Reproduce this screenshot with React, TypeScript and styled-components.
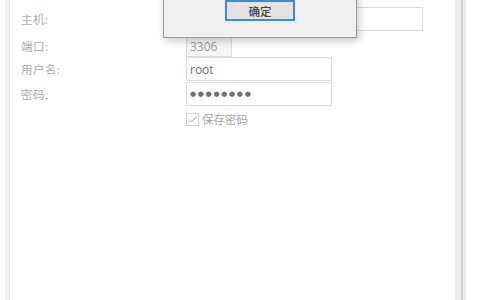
import styled, { createGlobalStyle } from "styled-components";

const GlobalStyle = createGlobalStyle`
  html, body {
    margin: 0;
    padding: 0;
    background: #ffffff;
  }
  body {
    font-family: "Noto Sans", "Noto Sans CJK SC", sans-serif;
  }
`;

interface Field {
  id: string;
  label: string;
  value: string;
  kind: "host" | "port" | "text" | "password";
}

const fields: Array<Field> = [
  { id: "host", label: "主机:", value: "", kind: "host" },
  { id: "port", label: "端口:", value: "3306", kind: "port" },
  { id: "user", label: "用户名:", value: "root", kind: "text" },
  { id: "pass", label: "密码:", value: "", kind: "password" },
];

const App = () => {
  return (
    <Root>
      <GlobalStyle />
      <LeftEdge />
      <Panel>
        <Form>
          {fields.map((field) => (
            <Row key={field.id} $kind={field.kind}>
              <Label>{field.label}</Label>
              <Input $kind={field.kind}>
                {field.kind === "password" ? <Dots>●●●●●●●●</Dots> : field.value}
              </Input>
            </Row>
          ))}
          <CheckRow>
            <Spacer />
            <CheckBox>
              <svg width="11" height="11" viewBox="0 0 11 11">
                <path d="M2 5.5 L4.5 8 L9.5 2.5" fill="none" stroke="#a0a0a0" strokeWidth="1" />
              </svg>
            </CheckBox>
            <CheckText>保存密码</CheckText>
          </CheckRow>
        </Form>
        <Dialog>
          <OkButton>确定</OkButton>
        </Dialog>
      </Panel>
      <RightEdge>
        <RightLine />
      </RightEdge>
    </Root>
  );
};

export default App;

const Root = styled.div`
  display: flex;
  width: 480px;
  height: 300px;
  background: #fff;
  overflow: hidden;
`;

const LeftEdge = styled.div`
  width: 4px;
  margin-left: 5px;
  background: #efefef;
  border-right: 1px solid #e4e4e4;
`;

const Panel = styled.div`
  position: relative;
  width: 445px;
  height: 100%;
`;

const RightEdge = styled.div`
  display: flex;
  width: 11px;
  background: #ededed;
`;

const RightLine = styled.div`
  width: 2px;
  margin-left: 6px;
  background: #d2d2d2;
`;

const Form = styled.div`
  display: flex;
  flex-direction: column;
  padding: 7px 0 0 11px;
`;

const rowTop: Record<Field["kind"], number> = {
  host: 0,
  port: 4,
  text: 0,
  password: 1,
};

const Row = styled.div<{ $kind: Field["kind"] }>`
  display: flex;
  align-items: center;
  margin-top: ${({ $kind }) => rowTop[$kind]}px;
`;

const Label = styled.div`
  width: 165px;
  font-size: 11.5px;
  color: #acacac;
  letter-spacing: 0.4px;
`;

const inputWidth: Record<Field["kind"], number> = {
  host: 237,
  port: 46,
  text: 146,
  password: 146,
};

const Input = styled.div<{ $kind: Field["kind"] }>`
  box-sizing: border-box;
  display: flex;
  align-items: center;
  width: ${({ $kind }) => inputWidth[$kind]}px;
  height: ${({ $kind }) => ($kind === "port" ? 22 : 24)}px;
  padding-left: 3px;
  border: 1px solid #dcdcdc;
  background: ${({ $kind }) => ($kind === "port" ? "#f6f6f6" : "#fff")};
  font-family: "Open Sans", "Noto Sans", sans-serif;
  font-size: 12px;
  color: ${({ $kind }) => ($kind === "port" ? "#9a9a9a" : "#6a6a6a")};
`;

const Dots = styled.span`
  font-family: "DejaVu Sans", sans-serif;
  font-size: 7px;
  letter-spacing: 1.7px;
  color: #707070;
`;

const CheckRow = styled.div`
  display: flex;
  align-items: center;
  margin-top: 5px;
`;

const Spacer = styled.div`
  width: 165px;
`;

const CheckBox = styled.div`
  box-sizing: border-box;
  display: flex;
  align-items: center;
  justify-content: center;
  width: 13px;
  height: 13px;
  border: 1px solid #d0d0d0;
  background: #fff;
`;

const CheckText = styled.span`
  margin-left: 3px;
  font-size: 11.5px;
  color: #a4a4a4;
`;

const Dialog = styled.div`
  position: absolute;
  top: -10px;
  left: 153px;
  box-sizing: border-box;
  display: flex;
  justify-content: center;
  align-items: flex-end;
  width: 194px;
  height: 48px;
  padding-bottom: 16px;
  background: #f0f0f0;
  border: 1px solid #9a9a9a;
  box-shadow: 2px 3px 8px rgba(0, 0, 0, 0.22);
`;

const OkButton = styled.div`
  box-sizing: border-box;
  display: flex;
  align-items: center;
  justify-content: center;
  width: 70px;
  height: 21px;
  background: #e3e3e3;
  border: 2px solid #3a8be0;
  font-size: 11.5px;
  font-weight: 500;
  color: #444;
`;
